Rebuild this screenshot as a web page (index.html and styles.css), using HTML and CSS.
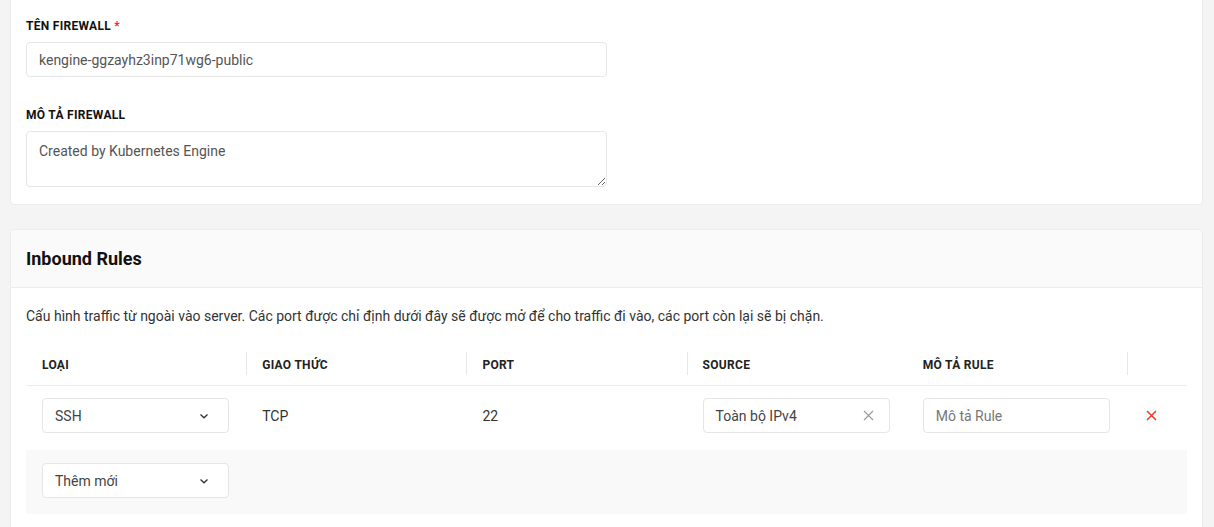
FILE: index.html
```html
<!DOCTYPE html>
<html lang="vi">
<head>
    <meta charset="UTF-8">
    <meta name="viewport" content="width=device-width, initial-scale=1.0">
    <title>Firewall</title>
    <link rel="stylesheet" href="styles.css">
</head>
<body>

    <div class="page">
        <div class="card card-info">
            <div class="form-group">
                <label class="label" for="ten">Tên Firewall <span class="required">*</span></label>
                <input class="input" type="text" id="ten" value="kengine-ggzayhz3inp71wg6-public">
            </div>
            <div class="form-group">
                <label class="label" for="mota">Mô tả Firewall</label>
                <textarea class="input textarea" id="mota">Created by Kubernetes Engine</textarea>
            </div>
        </div>

        <div class="card card-rules">
            <div class="card-header">Inbound Rules</div>
            <div class="card-body">
                <p class="desc">Cấu hình traffic từ ngoài vào server. Các port được chỉ định dưới đây sẽ được mở để cho traffic đi vào, các port còn lại sẽ bị chặn.</p>

                <table class="rules">
                    <colgroup>
                        <col class="col-wide">
                        <col class="col-wide">
                        <col class="col-wide">
                        <col class="col-wide">
                        <col class="col-wide">
                        <col class="col-action">
                    </colgroup>
                    <thead>
                        <tr>
                            <th>Loại</th>
                            <th class="sep">Giao thức</th>
                            <th class="sep">Port</th>
                            <th class="sep">Source</th>
                            <th>Mô tả Rule</th>
                            <th class="sep"></th>
                        </tr>
                    </thead>
                    <tbody>
                        <tr>
                            <td>
                                <div class="select">
                                    <span>SSH</span>
                                    <svg class="chevron" width="10" height="10" viewBox="0 0 10 10"><path d="M1.5 3.5 L5 6.8 L8.5 3.5" fill="none" stroke="#333" stroke-width="1.3"/></svg>
                                </div>
                            </td>
                            <td>TCP</td>
                            <td>22</td>
                            <td>
                                <div class="select">
                                    <span>Toàn bộ IPv4</span>
                                    <svg class="clear" width="11" height="11" viewBox="0 0 11 11"><path d="M1 1 L10 10 M10 1 L1 10" fill="none" stroke="#999" stroke-width="1.1"/></svg>
                                </div>
                            </td>
                            <td>
                                <input class="input input-sm" type="text" placeholder="Mô tả Rule">
                            </td>
                            <td class="action">
                                <svg width="11" height="11" viewBox="0 0 11 11"><path d="M1 1 L10 10 M10 1 L1 10" fill="none" stroke="#f5361f" stroke-width="1.5"/></svg>
                            </td>
                        </tr>
                        <tr class="row-add">
                            <td>
                                <div class="select">
                                    <span>Thêm mới</span>
                                    <svg class="chevron" width="10" height="10" viewBox="0 0 10 10"><path d="M1.5 3.5 L5 6.8 L8.5 3.5" fill="none" stroke="#333" stroke-width="1.3"/></svg>
                                </div>
                            </td>
                            <td></td>
                            <td></td>
                            <td></td>
                            <td></td>
                            <td></td>
                        </tr>
                    </tbody>
                </table>
            </div>
        </div>
    </div>

</body>
</html>
```

FILE: styles.css
```css
body {
    font-family: Roboto, "Liberation Sans", Arial, sans-serif;
    background-color: #f4f4f4;
    color: #222;
    margin: 0;
    padding: 0;
    overflow: hidden;
}

.page {
    padding: 0 11px 0 10px;
}

.card {
    background: white;
    border: 1px solid #ececec;
    border-radius: 4px;
}

.card-info {
    margin-top: -6px;
    padding: 22px 16px 17px 15px;
}

.form-group {
    margin-bottom: 29px;
}

.form-group:last-child {
    margin-bottom: 0;
}

.label {
    display: block;
    font-size: 12px;
    font-weight: bold;
    line-height: 18px;
    text-transform: uppercase;
    letter-spacing: 0.3px;
    color: #111;
    margin-bottom: 7px;
}

.required {
    color: #f5222d;
}

.input {
    display: block;
    box-sizing: border-box;
    width: 581px;
    height: 35px;
    padding: 0 12px;
    border: 1px solid #e6e6e6;
    border-radius: 4px;
    font-family: inherit;
    font-size: 14px;
    color: #555;
    background: white;
    outline: none;
}

.textarea {
    height: 56px;
    padding: 10px 12px;
    line-height: 18px;
    resize: vertical;
}

.input::placeholder {
    color: #777;
}

.card-rules {
    margin-top: 24px;
    height: 320px;
}

.card-header {
    background-color: #fafafa;
    border-bottom: 1px solid #ececec;
    padding: 16px 16px 16px 15px;
    font-size: 18px;
    font-weight: bold;
    line-height: 25px;
    color: #111;
    border-radius: 4px 4px 0 0;
}

.card-body {
    padding: 18px 16px 17px 15px;
}

.desc {
    margin: 0 0 17px;
    font-size: 14px;
    line-height: 20px;
    color: #333;
}

.rules {
    width: 1161px;
    border-collapse: collapse;
    table-layout: fixed;
}

.col-wide {
    width: 220px;
}

.col-action {
    width: 60px;
}

.rules th {
    position: relative;
    text-align: left;
    font-size: 12px;
    font-weight: bold;
    text-transform: uppercase;
    letter-spacing: 0.3px;
    color: #222;
    line-height: 18px;
    padding: 13px 16px 11px;
    border-bottom: 1px solid #ececec;
}

.rules th.sep::before {
    content: "";
    position: absolute;
    left: 0;
    top: 9px;
    width: 1px;
    height: 23px;
    background-color: #e8e8e8;
}

.rules td {
    font-size: 14px;
    color: #333;
    padding: 12px 16px 17px;
    vertical-align: middle;
}

.rules td:first-child {
    padding-right: 17px;
}

.row-add td {
    background-color: #f9f9f9;
    padding: 13px 16px 16px;
    height: 35px;
}

.select {
    display: flex;
    align-items: center;
    justify-content: space-between;
    box-sizing: border-box;
    width: 187px;
    height: 35px;
    padding: 0 14px 0 12px;
    border: 1px solid #e6e6e6;
    border-radius: 4px;
    background: white;
    font-size: 14px;
    color: #444;
}

.chevron {
    margin-right: 5px;
}

.clear {
    margin-right: 1px;
}

.input-sm {
    width: 187px;
}

.action {
    text-align: left;
}

.action svg {
    display: block;
    margin-left: 3px;
}
```
